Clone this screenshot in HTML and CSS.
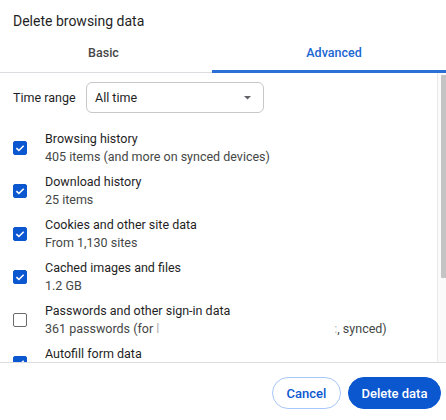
FILE: index.html
```html
<!DOCTYPE html>
<html lang="en">
<head>
    <meta charset="UTF-8">
    <meta name="viewport" content="width=device-width, initial-scale=1.0">
    <title>Delete browsing data</title>
    <link rel="stylesheet" href="styles.css">
</head>
<body>

    <div class="dialog">
        <header class="dialog-title">Delete browsing data</header>

        <nav class="tabs">
            <div class="tab tab-basic">Basic</div>
            <div class="tab tab-advanced active">Advanced</div>
        </nav>

        <div class="dialog-body">
            <div class="scroll-content">
                <div class="time-range">
                    <label for="timeRange">Time range</label>
                    <div class="select" id="timeRange">
                        <span>All time</span>
                        <svg class="select-arrow" width="7" height="4" viewBox="0 0 7 4"><path d="M0 0 L7 0 L3.5 3.5 Z" fill="#5f6368"/></svg>
                    </div>
                </div>

                <ul class="options">
                    <li class="option">
                        <span class="checkbox checked"><svg viewBox="0 0 14 14"><path d="M3.4 7.1 L5.9 9.5 L10.7 4.7" fill="none" stroke="#fff" stroke-width="1.6"/></svg></span>
                        <div class="option-text">
                            <div class="option-title">Browsing history</div>
                            <div class="option-sub">405 items (and more on synced devices)</div>
                        </div>
                    </li>
                    <li class="option">
                        <span class="checkbox checked"><svg viewBox="0 0 14 14"><path d="M3.4 7.1 L5.9 9.5 L10.7 4.7" fill="none" stroke="#fff" stroke-width="1.6"/></svg></span>
                        <div class="option-text">
                            <div class="option-title">Download history</div>
                            <div class="option-sub">25 items</div>
                        </div>
                    </li>
                    <li class="option">
                        <span class="checkbox checked"><svg viewBox="0 0 14 14"><path d="M3.4 7.1 L5.9 9.5 L10.7 4.7" fill="none" stroke="#fff" stroke-width="1.6"/></svg></span>
                        <div class="option-text">
                            <div class="option-title">Cookies and other site data</div>
                            <div class="option-sub">From 1,130 sites</div>
                        </div>
                    </li>
                    <li class="option">
                        <span class="checkbox checked"><svg viewBox="0 0 14 14"><path d="M3.4 7.1 L5.9 9.5 L10.7 4.7" fill="none" stroke="#fff" stroke-width="1.6"/></svg></span>
                        <div class="option-text">
                            <div class="option-title">Cached images and files</div>
                            <div class="option-sub">1.2 GB</div>
                        </div>
                    </li>
                    <li class="option">
                        <span class="checkbox"></span>
                        <div class="option-text">
                            <div class="option-title">Passwords and other sign-in data</div>
                            <div class="option-sub">361 passwords (for <span class="faint">l</span><span class="redacted"></span><span class="faint">:</span>, synced)</div>
                        </div>
                    </li>
                    <li class="option">
                        <span class="checkbox checked"><svg viewBox="0 0 14 14"><path d="M3.4 7.1 L5.9 9.5 L10.7 4.7" fill="none" stroke="#fff" stroke-width="1.6"/></svg></span>
                        <div class="option-text">
                            <div class="option-title">Autofill form data</div>
                            <div class="option-sub">2 addresses, 40 other suggestions</div>
                        </div>
                    </li>
                </ul>
            </div>
            <div class="scrollbar">
                <div class="scrollbar-thumb"></div>
            </div>
        </div>

        <footer class="dialog-footer">
            <button type="button" class="btn btn-cancel">Cancel</button>
            <button type="button" class="btn btn-primary">Delete data</button>
        </footer>
    </div>

</body>
</html>
```

FILE: styles.css
```css
body {
    margin: 0;
    font-family: 'Roboto', 'Inter', sans-serif;
    background: #fff;
    color: #1f1f1f;
}

.dialog {
    width: 446px;
    height: 420px;
    display: flex;
    flex-direction: column;
    overflow: hidden;
}

.dialog-title {
    height: 36px;
    padding: 12px 0 0 13px;
    box-sizing: border-box;
    font-size: 14px;
    line-height: 18px;
}

.tabs {
    display: grid;
    grid-template-columns: 212px 1fr;
    height: 37px;
    border-bottom: 1px solid #dadce0;
    box-sizing: border-box;
}

.tab {
    font-size: 12.5px;
    font-weight: 500;
    text-align: center;
    line-height: 34px;
    color: #474747;
    border-bottom: 3px solid transparent;
    margin-bottom: -1px;
}

.tab-basic {
    padding-right: 5px;
}

.tab-advanced {
    padding-left: 10px;
}

.tab.active {
    color: #1a66d2;
    border-bottom-color: #2b6fd6;
}

.dialog-body {
    height: 289px;
    display: flex;
    overflow: hidden;
}

.scroll-content {
    flex: 1;
    padding-top: 9px;
}

/* drawn scrollbar, the real one is hidden in headless mode */
.scrollbar {
    width: 5px;
    border-left: 1px solid #e8e8e8;
    background: #fafafa;
    padding: 2px 0 0 3px;
}

.scrollbar-thumb {
    height: 203px;
    background: #c4c4c4;
    border-radius: 1px 0 0 1px;
}

.time-range {
    display: flex;
    align-items: center;
    padding-left: 13px;
    font-size: 12.5px;
}

.time-range label {
    width: 73px;
}

.select {
    width: 178px;
    height: 31px;
    box-sizing: border-box;
    border: 1px solid #c7c7c7;
    border-radius: 6px;
    display: flex;
    align-items: center;
    justify-content: space-between;
    padding: 0 12px 0 8px;
}

.options {
    list-style: none;
    margin: 13px 0 0;
    padding: 0;
}

.option {
    display: flex;
    align-items: center;
    min-height: 43px;
    padding: 4px 0 3px 13px;
    box-sizing: border-box;
}

.checkbox {
    width: 14px;
    height: 14px;
    box-sizing: border-box;
    border: 1.5px solid #6b6b6b;
    border-radius: 2px;
    margin-right: 18px;
    flex-shrink: 0;
}

.checkbox.checked {
    background: #0b57d0;
    border-color: #0b57d0;
}

.checkbox svg {
    display: block;
    width: 14px;
    height: 14px;
    margin: -1.5px;
}

.option-title {
    font-size: 12.5px;
    line-height: 18px;
}

.option-sub {
    font-size: 12.5px;
    line-height: 18px;
    color: #444746;
}

.faint {
    color: #b5b5b5;
}

.redacted {
    display: inline-block;
    width: 175px;
}

.dialog-footer {
    flex: 1;
    border-top: 1px solid #dadce0;
    display: flex;
    justify-content: flex-end;
    gap: 7px;
    padding: 14px 5px 0 0;
    align-items: flex-start;
}

.btn {
    height: 32px;
    border-radius: 16px;
    font-family: 'Roboto', 'Inter', sans-serif;
    font-size: 13px;
    font-weight: 500;
    padding: 0;
    white-space: nowrap;
    cursor: pointer;
}

.btn-cancel {
    width: 69px;
    background: #fff;
    border: 1px solid #a8c7fa;
    color: #0b57d0;
}

.btn-primary {
    width: 93px;
    background: #0b57d0;
    border: 1px solid #0b57d0;
    color: #fff;
}
```
